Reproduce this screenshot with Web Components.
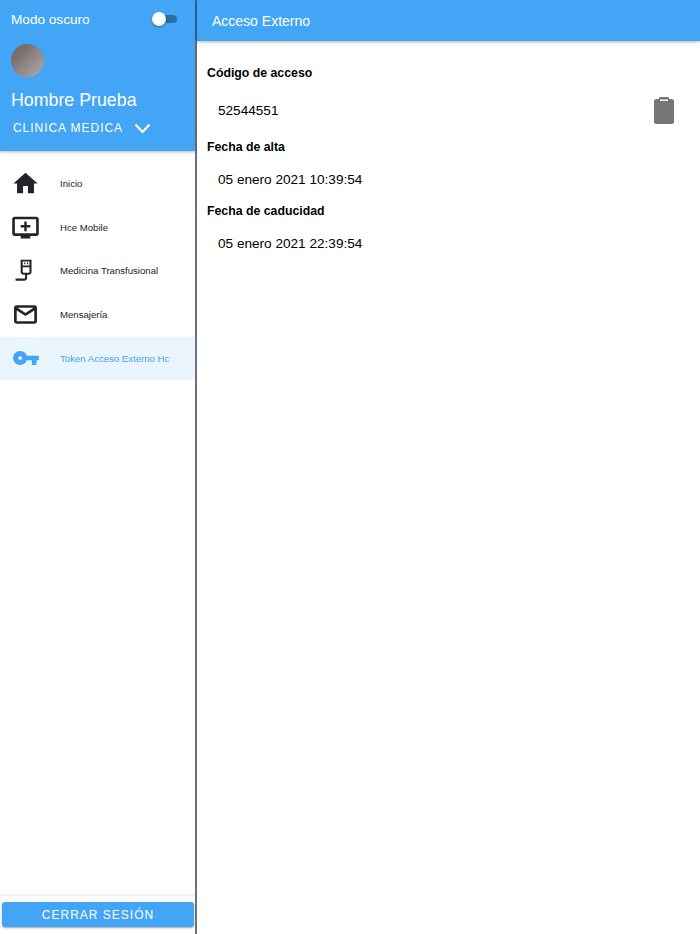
<!DOCTYPE html>
<html lang="es">
<head>
<meta charset="utf-8">
<title>Acceso Externo</title>
<style>
html, body { margin: 0; height: 100%; font-family: "Liberation Sans", Arial, sans-serif; background: #fff; }
body { display: flex; height: 934px; overflow: hidden; }
</style>
</head>
<body>
<app-menu>
  <menu-item label="Inicio" icon="home"></menu-item>
  <menu-item label="Hce Mobile" icon="screen"></menu-item>
  <menu-item label="Medicina Transfusional" icon="usb"></menu-item>
  <menu-item label="Mensajería" icon="mail"></menu-item>
  <menu-item label="Token Acceso Externo Hc" icon="key" active></menu-item>
</app-menu>
<access-page>
  <access-field label="Código de acceso" value="52544551" copy></access-field>
  <access-field label="Fecha de alta" value="05 enero 2021 10:39:54"></access-field>
  <access-field label="Fecha de caducidad" value="05 enero 2021 22:39:54"></access-field>
</access-page>
<script>
const ICONS = {
  home: '<path d="M10 20v-6h4v6h5v-8h3L12 3 2 12h3v8z"/>',
  screen: '<path d="M21 3H3c-1.1 0-2 .9-2 2v12c0 1.1.9 2 2 2h5v2h8v-2h5c1.1 0 2-.9 2-2V5c0-1.1-.9-2-2-2zm-.2 13.800H3.200V5.200h17.600v11.600zM16 10v2h-3v3h-2v-3H8v-2h3V7h2v3z"/>',
  usb: '<path fill-rule="evenodd" d="M8 3h9v10a2.500 2.500 0 0 1-2.500 2.500H13.300V18a2.400 2.400 0 0 1-2.400 2.400H3.800v-1.700h7.100a.7.7 0 0 0 .7-.7v-2.500h-1.100A2.500 2.500 0 0 1 8 13V3zm1.700 1.600v3.200h5.600V4.600H9.700zm0 4.800V13a.8.8 0 0 0 .8.8h4a.8.8 0 0 0 .8-.8V9.400H9.700z"/><path d="M10.800 5.300h1v1.500h-1zM13.200 5.300h1v1.500h-1z"/>',
  mail: '<path fill-rule="evenodd" d="M20 3.800H4A2.200 2.200 0 0 0 1.800 6v12A2.200 2.200 0 0 0 4 20.200h16a2.200 2.200 0 0 0 2.200-2.200V6A2.200 2.200 0 0 0 20 3.800zM4.200 18V8.400l7.800 4.900 7.800-4.900V18H4.200zM12 10.700 5 6h14l-7 4.700z"/>',
  key: '<path fill-rule="evenodd" d="M12.650 10C11.830 7.670 9.610 6 7 6c-3.310 0-6 2.690-6 6s2.690 6 6 6c2.610 0 4.830-1.670 5.650-4H17v4h4v-4h2v-4H12.650zM7 13.600c-.9 0-1.700-.7-1.700-1.600s.8-1.600 1.700-1.600 1.700.7 1.700 1.600-.8 1.600-1.700 1.600z"/>'
}

class MenuItem extends HTMLElement {
  constructor() {
    super()
    this.attachShadow({mode: "open"})
  }
  connectedCallback() {
    const name = this.getAttribute("icon")
    const icon = ICONS[name] || ""
    const size = name == "mail" ? 27 : name == "key" ? 28 : 29
    this.shadowRoot.innerHTML = /*html*/`
    <style>
      :host { display: flex; align-items: center; height: 43.750px; color: #222428; }
      :host([active]) { background: #ebf5fe; color: #42a5f5; }
      .icon { width: 30px; margin-left: 10px; display: flex; justify-content: center; flex: none; }
      :host([icon="key"]) .icon { transform: translateX(1px); }
      svg { width: ${size}px; height: ${size}px; fill: currentColor; flex: none; }
      span { margin-left: 20px; font-size: 9.600px; white-space: nowrap; }
    </style>
    <div class="icon"><svg viewBox="0 0 24 24">${icon}</svg></div>
    <span>${this.getAttribute("label")}</span>
    `
  }
}

class AppMenu extends HTMLElement {
  constructor() {
    super()
    this.attachShadow({mode: "open"})
    this.shadowRoot.innerHTML = /*html*/`
    <style>
      :host { display: flex; flex-direction: column; width: 195px; height: 934px; flex: none; border-right: 2px solid #6e7276; border-image: linear-gradient(#2d72ab 41px, #6e7276 41px) 2; background: #fff; }
      header { height: 151px; box-sizing: border-box; background: #42a5f5; color: #fff; padding: 0 0 0 11px; box-shadow: 0 1px 3px rgba(0,0,0,.3); position: relative; }
      .top { display: flex; align-items: center; justify-content: space-between; height: 38px; padding-right: 18px; font-size: 13.600px; }
      .toggle { width: 24px; height: 8px; border-radius: 4px; background: #2b6ea3; position: relative; }
      .toggle::before { content: ""; position: absolute; left: -1px; top: -3px; width: 14px; height: 14px; border-radius: 50%; background: #fff; box-shadow: 0 1px 2px rgba(0,0,0,.4); }
      .avatar { width: 33px; height: 33px; margin-top: 6px; border-radius: 50%; background: linear-gradient(135deg, #70625f 10%, #a9a4a6 90%); }
      .name { margin-top: 12px; font-size: 17.800px; line-height: 22px; }
      .place { display: flex; align-items: center; margin: 10px 0 0 2px; font-size: 12px; line-height: 14px; letter-spacing: .95px; }
      .place svg { margin-left: 11px; width: 17px; height: 11px; }
      nav { flex: 1; padding-top: 10.500px; }
      footer { border-top: 2px solid #f2f2f2; padding: 6px 1px 7px 2px; }
      button { display: block; width: 100%; height: 25px; border: 0; border-radius: 3px; padding: 0; background: #42a5f5; color: #fff; font: 12px "Liberation Sans", Arial, sans-serif; letter-spacing: 1px; box-shadow: 0 1px 2px rgba(0,0,0,.35); }
    </style>
    <header>
      <div class="top"><span>Modo oscuro</span><div class="toggle"></div></div>
      <div class="avatar"></div>
      <div class="name">Hombre Prueba</div>
      <div class="place"><span>CLINICA MEDICA</span>
        <svg viewBox="0 0 17 11"><path d="M1.500 1.500 8.500 9l7-7.500" fill="none" stroke="#fff" stroke-width="2.200"/></svg>
      </div>
    </header>
    <nav><slot></slot></nav>
    <footer><button>CERRAR SESIÓN</button></footer>
    `
  }
}

class AccessPage extends HTMLElement {
  constructor() {
    super()
    this.attachShadow({mode: "open"})
    this.shadowRoot.innerHTML = /*html*/`
    <style>
      :host { display: flex; flex-direction: column; flex: 1; min-width: 0; }
      header { height: 41px; flex: none; display: flex; align-items: center; padding-left: 15px; background: #42a5f5; color: #fff; font-size: 14px; box-shadow: 0 1px 3px rgba(0,0,0,.3); }
      main { padding: 22px 10px 0 10px; }
    </style>
    <header>Acceso Externo</header>
    <main><slot></slot></main>
    `
  }
}

class AccessField extends HTMLElement {
  constructor() {
    super()
    this.attachShadow({mode: "open"})
  }
  connectedCallback() {
    const copy = this.hasAttribute("copy")
    this.shadowRoot.innerHTML = /*html*/`
    <style>
      :host { display: block; color: #000; }
      .label { font-size: 12.300px; font-weight: bold; line-height: 18px; padding-top: 1px; margin-bottom: 1px; }
      .row { display: flex; align-items: center; justify-content: space-between; min-height: 44px; padding: 0 16px 0 11px; font-size: 13.600px; }
      :host([copy]) .row { min-height: 54px; }
      svg { width: 20px; height: 27px; fill: #757575; }
    </style>
    <div class="label">${this.getAttribute("label")}</div>
    <div class="row"><span>${this.getAttribute("value")}</span>
      ${copy ? '<svg viewBox="0 0 20 27"><path fill-rule="evenodd" d="M6 0h8a1 1 0 0 1 1 1v1h2.500A2.500 2.500 0 0 1 20 4.500v20a2.500 2.500 0 0 1-2.500 2.500h-15A2.500 2.500 0 0 1 0 24.500v-20A2.500 2.500 0 0 1 2.500 2H5V1a1 1 0 0 1 1-1zm0 2.500V4h8V2.500H6z"/></svg>' : ''}
    </div>
    `
  }
}

customElements.define("menu-item", MenuItem)
customElements.define("app-menu", AppMenu)
customElements.define("access-page", AccessPage)
customElements.define("access-field", AccessField)
</script>
</body>
</html>
